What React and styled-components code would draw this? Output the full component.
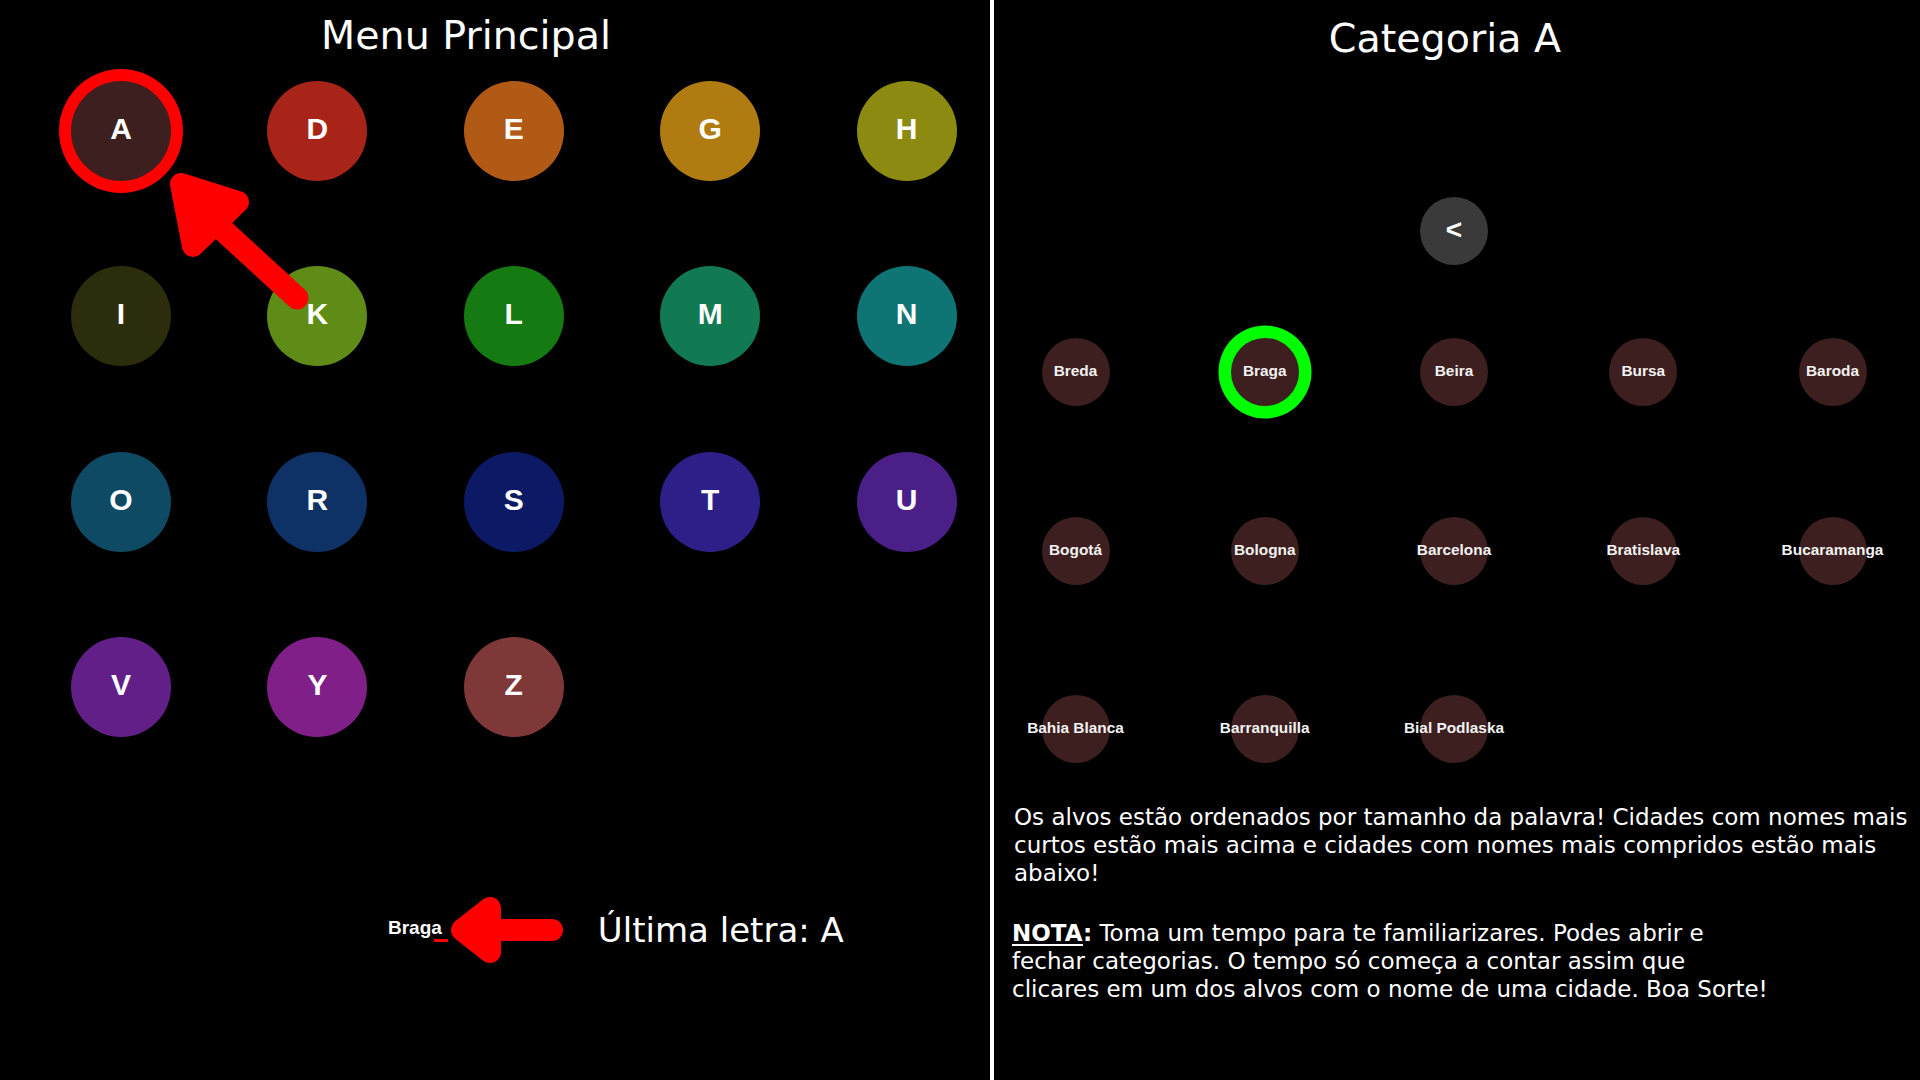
import React from "react";
import styled, { createGlobalStyle } from "styled-components";

const GlobalStyle = createGlobalStyle`
  html, body { margin: 0; padding: 0; background: #000; }
  body { width: 1920px; height: 1080px; overflow: hidden; }
  * { box-sizing: border-box; }
`;

const Screen = styled.div`
  display: flex;
  width: 1920px;
  height: 1080px;
  background: #000;
  color: #fff;
  font-family: "DejaVu Sans", sans-serif;
`;

const LeftPanel = styled.section`
  position: relative;
  width: 990px;
  flex: none;
  display: flex;
  flex-direction: column;
`;

const Divider = styled.div`
  width: 4px;
  flex: none;
  background: #fff;
`;

const RightPanel = styled.section`
  flex: 1;
  display: flex;
  flex-direction: column;
  padding-right: 6px;
`;

const Title = styled.h1`
  margin: 0;
  font-weight: normal;
  font-size: 39.6px;
  line-height: 46px;
  text-align: center;
  padding-top: ${(p) => p.$top}px;
  padding-right: ${(p) => p.$shift}px;
`;

const LetterGrid = styled.div`
  display: grid;
  grid-template-columns: repeat(5, 100px);
  column-gap: 96.4px;
  row-gap: 85.5px;
  margin: 22.5px 0 0 71px;
`;

const LetterCircle = styled.button`
  width: 100px;
  height: 100px;
  border: none;
  padding: 0 0 4px;
  border-radius: 50%;
  background: ${(p) => p.$bg};
  color: #fff;
  display: flex;
  align-items: center;
  justify-content: center;
  font-family: "Liberation Sans", Arial, sans-serif;
  font-weight: bold;
  font-size: 30px;
  box-shadow: ${(p) => (p.$selected ? "0 0 0 12px #ff0000" : "none")};
`;

const PointerArrow = styled.svg`
  position: absolute;
  left: 140px;
  top: 160px;
  width: 180px;
  height: 160px;
  overflow: visible;
  pointer-events: none;
`;

const BottomRow = styled.div`
  display: flex;
  align-items: center;
  margin-top: 158px;
  padding-left: 388px;
  height: 70px;
`;

const LastCity = styled.span`
  position: relative;
  font-family: "Liberation Sans", Arial, sans-serif;
  font-weight: bold;
  font-size: 19px;
  line-height: 22px;
  margin-bottom: 4px;
  &::after {
    content: "";
    position: absolute;
    left: 46px;
    top: 22px;
    width: 14px;
    height: 3px;
    background: #ff0000;
  }
`;

const SideArrow = styled.svg`
  width: 116px;
  height: 70px;
  margin-left: 8px;
  flex: none;
`;

const LastLetter = styled.span`
  font-size: 34px;
  line-height: 40px;
  margin-left: 32px;
`;

const BackButton = styled.button`
  align-self: center;
  width: 68px;
  height: 68px;
  margin-top: 136px;
  border: none;
  padding: 0 0 3px;
  border-radius: 50%;
  background: #3a3a3a;
  color: #fff;
  display: flex;
  align-items: center;
  justify-content: center;
  font-family: "Liberation Sans", Arial, sans-serif;
  font-weight: bold;
  font-size: 28px;
`;

const CityGrid = styled.div`
  align-self: center;
  display: grid;
  grid-template-columns: repeat(5, 68px);
  column-gap: 121.25px;
  row-gap: 110.5px;
  margin-top: 73px;
`;

const CityCircle = styled.button`
  width: 68px;
  height: 68px;
  border: none;
  padding: 0 0 2px;
  border-radius: 50%;
  background: #3d1f1f;
  color: #f2f2f2;
  display: flex;
  align-items: center;
  justify-content: center;
  white-space: nowrap;
  overflow: visible;
  font-family: "Liberation Sans", Arial, sans-serif;
  font-weight: bold;
  font-size: 15.4px;
  box-shadow: ${(p) => (p.$selected ? "0 0 0 12.5px #00ff00" : "none")};
`;

const Notes = styled.div`
  display: flex;
  flex-direction: column;
  gap: 32px;
  margin-top: 40px;
  padding-left: 20px;
  font-size: 23px;
  line-height: 28px;
`;

const Paragraph = styled.p`
  margin: 0 0 0 ${(p) => p.$indent || 0}px;
`;

const NoteTag = styled.strong`
  font-weight: bold;
  & > u {
    text-decoration: underline;
    text-underline-offset: 3px;
  }
`;

const letters = [
  ["A", "#3d1f1f"],
  ["D", "#a82418"],
  ["E", "#b05a15"],
  ["G", "#b07c12"],
  ["H", "#8c8a10"],
  ["I", "#2b2d0c"],
  ["K", "#5e8c17"],
  ["L", "#157a12"],
  ["M", "#127a52"],
  ["N", "#0f7474"],
  ["O", "#0f4a65"],
  ["R", "#0f3266"],
  ["S", "#0c1a66"],
  ["T", "#2d1f88"],
  ["U", "#4b1f88"],
  ["V", "#621f88"],
  ["Y", "#801f88"],
  ["Z", "#7f3838"],
];

const cities = [
  "Breda",
  "Braga",
  "Beira",
  "Bursa",
  "Baroda",
  "Bogotá",
  "Bologna",
  "Barcelona",
  "Bratislava",
  "Bucaramanga",
  "Bahia Blanca",
  "Barranquilla",
  "Bial Podlaska",
];

export default function App() {
  return (
    <>
      <GlobalStyle />
      <Screen>
        <LeftPanel>
          <Title $top={12} $shift={58}>Menu Principal</Title>
          <LetterGrid>
            {letters.map(([l, c]) => (
              <LetterCircle key={l} $bg={c} $selected={l === "A"}>
                {l}
              </LetterCircle>
            ))}
          </LetterGrid>
          <PointerArrow viewBox="140 160 180 160">
            <polygon
              points="181,184 238,202 193,246"
              fill="#ff0000"
              stroke="#ff0000"
              strokeWidth="22"
              strokeLinejoin="round"
            />
            <line
              x1="213"
              y1="221"
              x2="297"
              y2="298"
              stroke="#ff0000"
              strokeWidth="23"
              strokeLinecap="round"
            />
          </PointerArrow>
          <BottomRow>
            <LastCity>Braga</LastCity>
            <SideArrow viewBox="450 895 116 70">
              <polygon
                points="462,930 490,908 490,952"
                fill="#ff0000"
                stroke="#ff0000"
                strokeWidth="22"
                strokeLinejoin="round"
              />
              <line
                x1="488"
                y1="930"
                x2="552"
                y2="930"
                stroke="#ff0000"
                strokeWidth="22"
                strokeLinecap="round"
              />
            </SideArrow>
            <LastLetter>Última letra: A</LastLetter>
          </BottomRow>
        </LeftPanel>
        <Divider />
        <RightPanel>
          <Title $top={15} $shift={18}>Categoria A</Title>
          <BackButton>&lt;</BackButton>
          <CityGrid>
            {cities.map((c) => (
              <CityCircle key={c} $selected={c === "Braga"}>
                {c}
              </CityCircle>
            ))}
          </CityGrid>
          <Notes>
            <Paragraph>
              Os alvos estão ordenados por tamanho da palavra! Cidades com nomes
              mais curtos estão mais acima e cidades com nomes mais compridos
              estão mais abaixo!
            </Paragraph>
            <Paragraph $indent={-2}>
              <NoteTag>
                <u>NOTA</u>:
              </NoteTag>{" "}
              Toma um tempo para te familiarizares. Podes abrir e
              <br />
              fechar categorias. O tempo só começa a contar assim que
              <br />
              clicares em um dos alvos com o nome de uma cidade. Boa Sorte!
            </Paragraph>
          </Notes>
        </RightPanel>
      </Screen>
    </>
  );
}
